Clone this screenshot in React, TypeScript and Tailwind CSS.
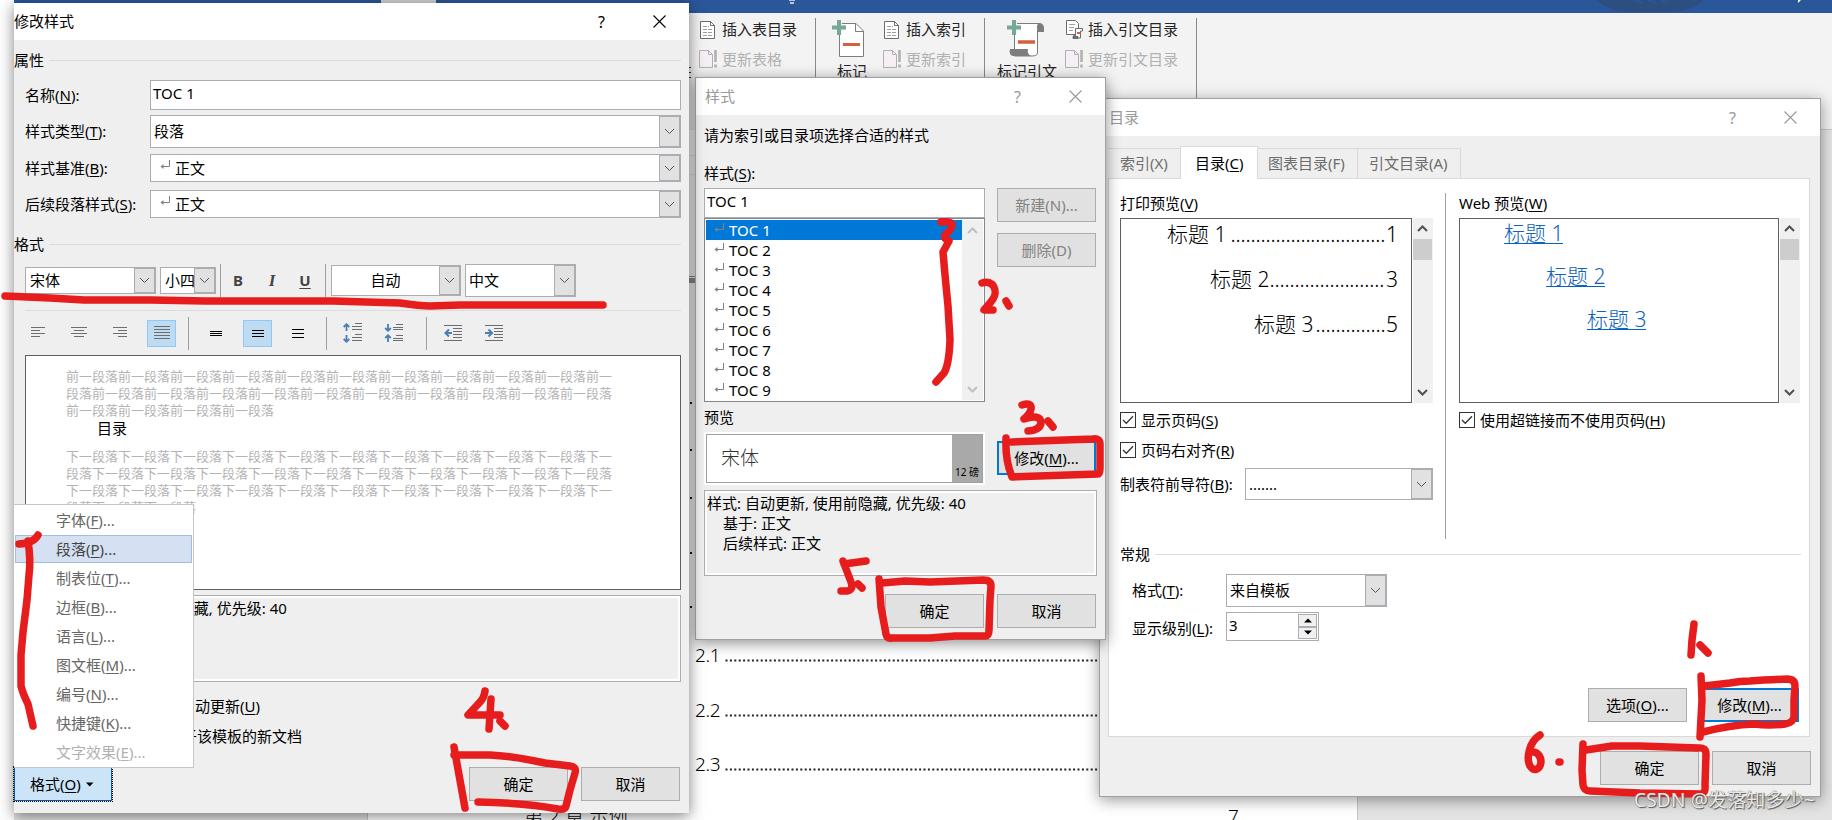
import type { ReactNode } from "react";
import clsx from "clsx";

const K = ({ children }: { children: ReactNode }) => (
  <span className="underline decoration-1 underline-offset-[2px]">{children}</span>
);

function Chevron({ up, bold, className }: { up?: boolean; bold?: boolean; className?: string }) {
  return (
    <svg width="11" height="7" viewBox="0 0 11 7" fill="none" className={className}>
      <path
        d={up ? "M1 6L5.5 1.5L10 6" : "M1 1L5.5 5.5L10 1"}
        stroke="currentColor"
        strokeWidth={bold ? 2 : 1}
      />
    </svg>
  );
}

function CloseIcon() {
  return (
    <svg width="13" height="13" viewBox="0 0 13 13" stroke="currentColor" strokeWidth="1.1">
      <path d="M.5 .5L12.5 12.5M12.5 .5L.5 12.5" />
    </svg>
  );
}

function ReturnIcon() {
  return (
    <svg width="10" height="10" viewBox="0 0 10 10" fill="none" stroke="#808080" className="shrink-0">
      <path d="M9.5 0V6.5H1" />
      <path d="M3.5 4V9L.5 6.5Z" fill="#808080" stroke="none" />
    </svg>
  );
}

function TitleBar({ title, active, className }: { title: string; active?: boolean; className?: string }) {
  return (
    <div
      className={clsx(
        "flex h-[37px] shrink-0 items-center bg-white",
        active ? "text-black" : "text-[#999]",
        className
      )}
    >
      <span className="flex-1">{title}</span>
      <span className="mr-[48px] text-base">?</span>
      <CloseIcon />
    </div>
  );
}

function Select({ children, className }: { children: ReactNode; className?: string }) {
  return (
    <div className={clsx("flex border border-[#abadb3] bg-white", className)}>
      <div className="flex min-w-0 flex-1 items-center overflow-hidden pl-[3px]">{children}</div>
      <div className="flex w-[21px] shrink-0 items-center justify-center border border-[#abadb3] bg-[#e1e1e1] text-[#555]">
        <Chevron />
      </div>
    </div>
  );
}

function Button({
  children,
  primary,
  disabled,
  className,
}: {
  children: ReactNode;
  primary?: boolean;
  disabled?: boolean;
  className?: string;
}) {
  return (
    <button
      className={clsx(
        "flex h-[34px] w-[99px] shrink-0 items-center justify-center bg-[#e1e1e1]",
        primary ? "border-2 border-[#0078d7]" : "border border-[#adadad]",
        disabled && "text-[#838383]",
        className
      )}
    >
      {children}
    </button>
  );
}

function Section({ title, className }: { title: string; className?: string }) {
  return (
    <div className={clsx("flex h-5 shrink-0 items-center pb-[2px]", className)}>
      <span>{title}</span>
      <div className="ml-[5px] h-px flex-1 bg-[#dcdcdc]" />
    </div>
  );
}

function Lines({ rows, color = "#6d6d6d" }: { rows: number[][]; color?: string }) {
  return (
    <svg width="20" height="20" viewBox="0 0 20 20" stroke={color} className="shrink-0">
      {rows.map(([x1, x2, y], i) => (
        <path key={i} d={`M${x1} ${y}H${x2}`} />
      ))}
    </svg>
  );
}

const Divider = ({ className }: { className?: string }) => (
  <div className={clsx("h-[33px] w-px shrink-0 bg-[#a0a0a0]", className)} />
);

const menuItems = [
  { label: "字体", k: "F" },
  { label: "段落", k: "P", selected: true },
  { label: "制表位", k: "T" },
  { label: "边框", k: "B" },
  { label: "语言", k: "L" },
  { label: "图文框", k: "M" },
  { label: "编号", k: "N" },
  { label: "快捷键", k: "K" },
  { label: "文字效果", k: "E", disabled: true },
];

function FormatMenu() {
  return (
    <div className="absolute top-[501px] left-0 flex h-[264px] w-[180px] flex-col border border-l-0 border-[#c6c6c6] bg-white pt-[1px]">
      {menuItems.map((item) => (
        <div
          key={item.label}
          className={clsx(
            "mr-[1px] ml-[1px] flex shrink-0 items-center",
            item.selected ? "mb-px h-[28px] border border-[#a3bde3] bg-[#d5e1f2] pl-[40px] text-[#444]" : "h-[29px] pl-[41px]",
            item.disabled ? "text-[#b1b1b1]" : !item.selected && "text-[#666]"
          )}
        >
          <span>
            {item.label}(<K>{item.k}</K>)...
          </span>
        </div>
      ))}
    </div>
  );
}

function ModifyStyleDialog() {
  return (
    <div className="absolute top-[3px] left-[14px] flex h-[810px] w-[675px] flex-col bg-[#efefef] shadow-[0_3px_14px_rgba(0,0,0,0.5)]">
      <TitleBar title="修改样式" active className="pr-[23px]" />
      <Section title="属性" className="mt-[11px] mr-[8px]" />

      <div className="mt-[9px] flex h-[30px] shrink-0 items-center pl-[11px]">
        <span className="w-[125px]">名称(<K>N</K>):</span>
        <div className="flex h-full w-[531px] items-center border border-[#abadb3] bg-white pb-[3px] pl-[2px]">TOC 1</div>
      </div>
      <div className="mt-[5px] flex h-[33px] shrink-0 items-center pl-[11px]">
        <span className="w-[125px]">样式类型(<K>T</K>):</span>
        <Select className="h-full w-[531px]">段落</Select>
      </div>
      <div className="mt-[6px] flex h-[28px] shrink-0 items-center pl-[11px]">
        <span className="w-[125px]">样式基准(<K>B</K>):</span>
        <Select className="h-full w-[531px]">
          <span className="mr-[5px] mb-[6px] ml-[6px]"><ReturnIcon /></span>正文
        </Select>
      </div>
      <div className="mt-[8px] flex h-[28px] shrink-0 items-center pl-[11px]">
        <span className="w-[125px]">后续段落样式(<K>S</K>):</span>
        <Select className="h-full w-[531px]">
          <span className="mr-[5px] mb-[6px] ml-[6px]"><ReturnIcon /></span>正文
        </Select>
      </div>

      <Section title="格式" className="mt-[17px] mr-[8px]" />
      <div className="mt-[9px] flex h-[33px] shrink-0 items-center pl-[11px]">
        <Select className="h-[27px] w-[131px]"><span className="pl-px">宋体</span></Select>
        <Select className="ml-[4px] h-[27px] w-[56px]"><span className="pl-px whitespace-nowrap">小四</span></Select>
        <Divider className="ml-[4px]" />
        <span className="ml-[7px] w-[20px] text-center font-bold text-[#444]">B</span>
        <span className="ml-[14px] w-[20px] text-center font-[Liberation_Serif] text-[17px] font-bold text-[#444] italic">I</span>
        <span className="ml-[13px] w-[20px] text-center font-bold text-[#444] underline underline-offset-[2px]">U</span>
        <Divider className="ml-[10px]" />
        <Select className="ml-[5px] h-[31px] w-[130px]"><span className="flex-1 pr-[3px] text-center">自动</span></Select>
        <Select className="ml-[4px] h-[33px] w-[111px]">中文</Select>
      </div>

      <div className="mt-[13px] mr-[8px] ml-[11px] h-px shrink-0 bg-[#dcdcdc]" />
      <div className="mt-[6px] flex h-[33px] shrink-0 items-center pb-px pl-[14px]">
        <Lines rows={[[3, 17, 4.5], [3, 12, 7.5], [3, 17, 10.5], [3, 12, 13.5]]} />
        <span className="w-[21px]" />
        <Lines rows={[[2, 18, 4.5], [5, 15, 7.5], [2, 18, 10.5], [5, 15, 13.5]]} />
        <span className="w-[21px]" />
        <Lines rows={[[3, 17, 4.5], [8, 17, 7.5], [3, 17, 10.5], [8, 17, 13.5]]} />
        <div className="ml-[17px] flex h-[27px] w-[29px] items-center justify-center border border-[#90c8f6] bg-[#bfdbf1]">
          <Lines rows={[[2, 18, 3.5], [2, 18, 6.5], [2, 18, 9.5], [2, 18, 12.5], [2, 18, 15.5]]} />
        </div>
        <Divider className="ml-[12px]" />
        <span className="w-[17px]" />
        <Lines color="#000" rows={[[4, 16, 8.5], [4, 16, 10.5], [4, 16, 12.5]]} />
        <div className="ml-[17px] flex h-[27px] w-[29px] items-center justify-center border border-[#90c8f6] bg-[#bfdbf1]">
          <Lines color="#000" rows={[[4, 16, 7.5], [4, 16, 10.5], [4, 16, 13.5]]} />
        </div>
        <span className="w-[16px]" />
        <Lines color="#000" rows={[[4, 16, 6.5], [4, 16, 10.5], [4, 16, 14.5]]} />
        <Divider className="ml-[18px]" />
        <svg width="20" height="20" viewBox="0 0 20 20" fill="none" className="ml-[16px] shrink-0">
          <path d="M12 .5H19M9 3.5H19M9 6.5H19M12 11.5H19M9 14.5H19M9 17.5H19" stroke="#6d6d6d" />
          <path d="M3.5 1V8M3.5 12V19M.7 4L3.5 1.2L6.3 4M.7 16L3.5 18.8L6.3 16" stroke="#4a7fb5" strokeWidth="1.8" />
        </svg>
        <svg width="20" height="20" viewBox="0 0 20 20" fill="none" className="ml-[21px] shrink-0">
          <path d="M12 1.5H19M9 4.5H19M12 12.5H19M9 15.5H19M9 6.5H19M9 17.5H19" stroke="#6d6d6d" />
          <path d="M4 1V8M4 12V19M1.2 5L4 7.8L6.8 5M1.2 15L4 12.2L6.8 15" stroke="#4a7fb5" strokeWidth="1.8" />
        </svg>
        <Divider className="ml-[22px]" />
        <svg width="20" height="20" viewBox="0 0 20 20" fill="none" className="ml-[17px] shrink-0">
          <path d="M0 2.5H18M9 5.5H18M9 8.5H18M9 11.5H18M9 14.5H18M0 17.5H18" stroke="#6d6d6d" />
          <path d="M1 10H8M5 6.5L1.5 10L5 13.5" stroke="#4a7fb5" strokeWidth="2" />
        </svg>
        <svg width="20" height="20" viewBox="0 0 20 20" fill="none" className="ml-[21px] shrink-0">
          <path d="M0 2.5H18M9 5.5H18M9 8.5H18M9 11.5H18M9 14.5H18M0 17.5H18" stroke="#6d6d6d" />
          <path d="M0 10H7M3.5 6.5L7 10L3.5 13.5" stroke="#4a7fb5" strokeWidth="2" />
        </svg>
      </div>

      <div className="mt-[5px] mr-[8px] ml-[11px] h-[235px] shrink-0 overflow-hidden border border-[#5f5f5f] bg-white pt-[12px] pl-[40px] text-[13px] leading-[17px] text-[#b4b4b4]">
        <p className="w-[547px] break-all">{"前一段落".repeat(25)}</p>
        <p className="mb-[10px] pl-[31px] text-[15px] leading-[19px] text-black">目录</p>
        <p className="w-[547px] break-all">{"下一段落".repeat(34)}</p>
      </div>

      <div className="mt-[5px] mr-[8px] ml-[11px] h-[87px] shrink-0 border border-[#abadb3] bg-[#efefef] pt-[3px] pl-[2px] leading-[18px] ring-2 ring-white ring-inset">
        样式: 自动更新, 使用前隐藏, 优先级: 40
      </div>
      <div className="mt-[14px] flex h-5 shrink-0 items-center pl-[166px]">自动更新(<K>U</K>)</div>
      <div className="mt-[10px] flex h-5 shrink-0 items-center pl-[153px]">基于该模板的新文档</div>
      <div className="mt-[21px] flex h-[34px] shrink-0">
        <button className="flex w-[98px] items-center border border-[#0c5ba5] bg-[#cce4f7] pl-[15px] outline-1 outline-black outline-dotted">
          格式(<K>O</K>)
          <svg width="8" height="5" viewBox="0 0 8 5" className="ml-[5px]">
            <path d="M0 .5H7.5L3.7 4.5Z" />
          </svg>
        </button>
        <Button className="ml-[357px]">确定</Button>
        <Button className="ml-[13px]">取消</Button>
      </div>
      <FormatMenu />
    </div>
  );
}

function StyleDialog() {
  return (
    <div className="absolute top-[77px] left-[695px] flex h-[563px] w-[411px] flex-col border border-[#a0a0a0] bg-[#efefef] shadow-[0_3px_14px_rgba(0,0,0,0.45)]">
      <TitleBar title="样式" className="pr-[23px] pl-[9px]" />
      <p className="mt-[10px] ml-[8px] h-5 shrink-0 leading-5">请为索引或目录项选择合适的样式</p>
      <p className="mt-[18px] ml-[8px] h-5 shrink-0 leading-5">样式(<K>S</K>):</p>
      <div className="mt-[5px] flex shrink-0 pl-[8px]">
        <div className="w-[281px]">
          <div className="flex h-[30px] items-center border border-[#abadb3] bg-white pb-[3px] pl-[2px]">TOC 1</div>
          <div className="flex h-[184px] border border-[#828790] bg-white">
            <ul className="flex-1 pt-px pl-px">
              {[1, 2, 3, 4, 5, 6, 7, 8, 9].map((n) => (
                <li key={n} className={clsx("flex h-5 items-center pl-[8px]", n === 1 && "bg-[#0078d7] text-white")}>
                  <span className="mr-[5px] mb-[5px]"><ReturnIcon /></span>
                  TOC {n}
                </li>
              ))}
            </ul>
            <div className="my-px mr-px flex w-[21px] flex-col items-center justify-between bg-[#f0f0f0] py-[7px] text-[#bfbfbf]">
              <Chevron up bold />
              <Chevron bold />
            </div>
          </div>
          <p className="mt-[5px] h-5 leading-5">预览</p>
          <div className="mt-[5px] h-[53px] bg-white p-[2px]">
            <div className="flex h-full border border-[#a0a0a0]">
              <div className="flex flex-1 items-center pl-[14px] text-[19px] font-light text-[#333]">宋体</div>
              <div className="flex w-[30px] items-end justify-center bg-[#a9a9a9] pb-[5px] text-[10px] whitespace-nowrap">12 磅</div>
            </div>
          </div>
        </div>
        <div className="ml-[12px]">
          <Button disabled>新建(N)...</Button>
          <Button disabled className="mt-[11px]">删除(D)</Button>
          <Button primary className="mt-[174px]">修改(<K>M</K>)...</Button>
        </div>
      </div>
      <div className="mt-[5px] ml-[8px] h-[86px] w-[393px] shrink-0 border border-[#abadb3] pt-[2px] pl-[2px] leading-5 ring-2 ring-white ring-inset">
        <p>样式: 自动更新, 使用前隐藏, 优先级: 40</p>
        <p className="pl-[16px]">基于: 正文</p>
        <p className="pl-[16px]">后续样式: 正文</p>
      </div>
      <div className="mt-[18px] flex gap-[13px] pl-[189px]">
        <Button>确定</Button>
        <Button>取消</Button>
      </div>
    </div>
  );
}

function ScrollBar() {
  return (
    <div className="ml-px flex w-[20px] shrink-0 flex-col items-center bg-[#f0f0f0] text-[#505050]">
      <div className="flex h-[21px] items-center"><Chevron up bold className="mr-px" /></div>
      <div className="mr-px h-[21px] w-[19px] bg-[#cdcdcd]" />
      <Chevron bold className="mt-auto mr-px mb-[7px]" />
    </div>
  );
}

function Checkbox({ children }: { children: ReactNode }) {
  return (
    <div className="flex h-5 items-center">
      <svg width="16" height="16" viewBox="0 0 16 16" fill="none" stroke="#333" className="mr-[5px]">
        <rect x=".5" y=".5" width="15" height="15" fill="#fff" />
        <path d="M3 8L6.3 11.3L13 4.3" strokeWidth="1.3" />
      </svg>
      <span>{children}</span>
    </div>
  );
}

const headings = [
  { level: 1, page: 1, dots: 31, indent: "pl-[46px]", gap: "ml-[4px]", web: "ml-[44px]" },
  { level: 2, page: 3, dots: 23, indent: "pl-[89px]", gap: "ml-0", web: "ml-[86px]" },
  { level: 3, page: 5, dots: 14, indent: "pl-[133px]", gap: "ml-[2px]", web: "ml-[127px]" },
];

function TocDialog() {
  return (
    <div className="absolute top-[98px] left-[1099px] flex h-[699px] w-[722px] flex-col border border-[#a0a0a0] bg-[#efefef] shadow-[0_3px_14px_rgba(0,0,0,0.4)]">
      <TitleBar title="目录" className="pr-[23px] pl-[9px]" />
      <div className="mt-[10px] flex h-[32px] shrink-0 items-end pl-[8px] text-[#6d6d6d]">
        <div className="flex h-[30px] w-[72px] items-center border-t border-[#d9d9d9] pl-[12px]">索引(X)</div>
        <div className="relative z-10 -mb-px flex h-[33px] w-[78px] items-center border border-b-0 border-[#d9d9d9] bg-white pl-[14px] text-black">
          <span>目录(<K>C</K>)</span>
        </div>
        <div className="flex h-[30px] w-[100px] items-center border-t border-r border-[#d9d9d9] pl-[10px]">图表目录(F)</div>
        <div className="flex h-[30px] w-[103px] items-center border-t border-r border-[#d9d9d9] pl-[11px]">引文目录(A)</div>
      </div>

      <div className="ml-[8px] flex h-[559px] w-[702px] shrink-0 flex-col border border-[#d9d9d9] bg-white pl-[11px]">
        <div className="flex h-[360px] shrink-0 pt-[14px]">
          <div className="w-[325px]">
            <p className="h-5 leading-5">打印预览(<K>V</K>)</p>
            <div className="mt-[5px] flex h-[185px]">
              <div className="w-[292px] border border-[#5f5f5f] pr-[13px] text-[21px] font-light">
                {headings.map((h) => (
                  <div key={h.level} className={clsx("flex h-[45px] leading-[30px]", h.indent)}>
                    <span className="whitespace-nowrap">标题 {h.level}</span>
                    <span className={clsx("w-0 flex-1 tracking-[-0.13px] whitespace-nowrap", h.gap)}>
                      {".".repeat(h.dots)}
                    </span>
                    <span>{h.page}</span>
                  </div>
                ))}
              </div>
              <ScrollBar />
            </div>
            <div className="mt-[7px]"><Checkbox>显示页码(<K>S</K>)</Checkbox></div>
            <div className="mt-[10px]"><Checkbox>页码右对齐(<K>R</K>)</Checkbox></div>
            <div className="mt-[8px] flex h-[32px] items-center">
              <span className="w-[125px]">制表符前导符(<K>B</K>):</span>
              <Select className="h-full w-[188px]">.......</Select>
            </div>
          </div>
          <div className="w-px bg-[#a0a0a0]" />
          <div className="ml-[13px]">
            <p className="h-5 leading-5">Web 预览(<K>W</K>)</p>
            <div className="mt-[5px] flex h-[185px]">
              <div className="w-[320px] border border-[#5f5f5f] text-[21px] font-light text-[#0f62c0]">
                {headings.map((h) => (
                  <div key={h.level} className="h-[43px]">
                    <a className={clsx("inline-block h-[25px] border-b border-[#0563c1] leading-[28px]", h.web)}>标题 {h.level}</a>
                  </div>
                ))}
              </div>
              <ScrollBar />
            </div>
            <div className="mt-[7px]"><Checkbox>使用超链接而不使用页码(<K>H</K>)</Checkbox></div>
          </div>
        </div>

        <Section title="常规" className="mt-[6px] mr-[8px]" />
        <div className="mt-[9px] flex h-[33px] shrink-0 items-center pl-[12px]">
          <span className="w-[94px]">格式(<K>T</K>):</span>
          <Select className="h-full w-[161px]">来自模板</Select>
        </div>
        <div className="mt-[5px] flex h-[29px] shrink-0 items-center pl-[12px]">
          <span className="w-[94px] pt-[4px]">显示级别(<K>L</K>):</span>
          <div className="flex h-full w-[93px] border border-[#abadb3] p-px">
            <span className="flex-1 pl-px leading-[23px]">3</span>
            <div className="flex w-[19px] flex-col">
              <div className="flex flex-1 items-center justify-center border border-[#abadb3] bg-[#f0f0f0]">
                <svg width="8" height="5" viewBox="0 0 8 5"><path d="M0 4.5H8L4 .5Z" /></svg>
              </div>
              <div className="flex flex-1 items-center justify-center border border-[#abadb3] bg-[#f0f0f0]">
                <svg width="8" height="5" viewBox="0 0 8 5"><path d="M0 .5H8L4 4.5Z" /></svg>
              </div>
            </div>
          </div>
        </div>
        <div className="mt-[47px] flex gap-[13px] pl-[468px]">
          <Button>选项(<K>O</K>)...</Button>
          <Button primary>修改(<K>M</K>)...</Button>
        </div>
      </div>
      <div className="mt-[14px] flex gap-[13px] pl-[500px]">
        <Button>确定</Button>
        <Button>取消</Button>
      </div>
    </div>
  );
}

function TableDocIcon() {
  return (
    <svg width="16" height="18" viewBox="0 0 16 18" fill="#fff" stroke="#6d6d6d">
      <path d="M.5 .5H10.5L14.5 4.5V17.5H.5Z" />
      <path d="M10.5 .5V4.5H14.5" fill="none" />
      <path d="M3 5.5H9M3 8.5H12M3 11.5H12M3 14.5H12" stroke="#a0a0a0" strokeDasharray="4 1" />
    </svg>
  );
}

function UpdateIcon() {
  return (
    <svg width="18" height="18" viewBox="0 0 18 18" fill="#f6f0f6" stroke="#b1b1b1">
      <path d="M.5 .5H9.5L13.5 4.5V17.5H.5Z" />
      <path d="M9.5 .5V4.5H13.5" fill="none" />
      <path d="M16.5 0V12M16.5 14.5V17.5" strokeWidth="2.6" />
    </svg>
  );
}

function CiteIcon() {
  return (
    <svg width="18" height="19" viewBox="0 0 18 19" fill="#fff" stroke="#6d6d6d">
      <path d="M.5 .5H9.5L12.5 3.5V14.5H.5Z" />
      <path d="M3 4.5H9M3 7.5H8M3 10.5H7" stroke="#a0a0a0" />
      <path d="M9.5 8.5H16.5V11H14.5V18H7.5V15.5H9.5Z" />
      <path d="M7 16.5H12V18.5H7Z" fill="#6d6d6d" />
      <path d="M11 13H14" stroke="#d35f3f" strokeWidth="2" />
    </svg>
  );
}

function MarkEntryIcon() {
  return (
    <svg width="34" height="38" viewBox="0 0 34 38" fill="none">
      <path d="M7.5 3.5H24L31.5 11V36.5H7.5Z" fill="#fff" stroke="#7d7d7d" />
      <path d="M23.5 3.5V11.5H31.5" stroke="#7d7d7d" />
      <path d="M4 0H10V5H14V11H10V15H4V11H0V5H4Z" fill="#f3f3f3" />
      <path d="M11 24.5H28" stroke="#d35f3f" strokeWidth="3" />
      <path d="M7 0V15M0 7.5H14" stroke="#76a797" strokeWidth="4" />
    </svg>
  );
}

function MarkCitationIcon() {
  return (
    <svg width="38" height="38" viewBox="0 0 38 38" fill="none">
      <path d="M7.5 3.5H33C30 4 30.5 7 30.5 11V33C30.5 35 28 36 25 36H7.5Z" fill="#fff" stroke="#7d7d7d" />
      <path d="M32 3C35 3 37 5 37 8V12H30.5V6C30.5 4 31 3 32 3Z" fill="#7d7d7d" />
      <path d="M3 29H21C20 33 22 36 25 36H6C3 36 2 32 3 29Z" fill="#7d7d7d" />
      <path d="M4 0H10V5H14V11H10V15H4V11H0V5H4Z" fill="#f3f3f3" />
      <path d="M11 22H28" stroke="#d35f3f" strokeWidth="3.5" />
      <path d="M7 0V15M0 7.5H14" stroke="#76a797" strokeWidth="4" />
    </svg>
  );
}

function RibbonPair({ icon, top, bottom }: { icon: ReactNode; top: string; bottom: string }) {
  return (
    <div className="flex flex-col text-[15px] whitespace-nowrap">
      <div className="flex h-[29px] items-center">
        <span className="w-[22px]">{icon}</span>
        <span className="text-[#262626]">{top}</span>
      </div>
      <div className="flex h-[29px] items-center pt-px">
        <span className="-ml-px w-[23px]"><UpdateIcon /></span>
        <span className="text-[#b1b1b1]">{bottom}</span>
      </div>
    </div>
  );
}

function WordWindow() {
  return (
    <div className="ml-[14px] flex h-[820px] flex-col bg-[#e3e3e3]">
      <div className="h-[13px] shrink-0 bg-[#2a579a]">
        <svg width="1818" height="13" viewBox="14 0 1818 13">
          <rect x="381" y="0" width="55" height="3" fill="#d4d4d4" />
          <path d="M1596 0H1704Q1690 12 1672 12H1628Q1610 12 1596 0Z" fill="#2d4e81" />
          <path d="M1635 0L1642 3M1648 0L1656 3M1662 0L1667 2" stroke="#2a579a" strokeWidth="2" />
          <path d="M789 0H795M790 3H794" stroke="#e6ecf5" strokeWidth="1.6" />
          <path d="M1798 0H1801L1798 3Z" fill="#fff" />
        </svg>
      </div>
      <div className="flex h-[117px] shrink-0 items-start border-b border-[#c8c8c8] bg-[#f3f3f3] pl-[685px]">
        <div className="mt-[2px] w-[116px] pl-px">
          <RibbonPair icon={<TableDocIcon />} top="插入表目录" bottom="更新表格" />
        </div>
        <div className="mt-[5px] h-[90px] w-px bg-[#8a8a8a]" />
        <div className="mt-[7px] ml-[16px] flex w-[52px] flex-col">
          <MarkEntryIcon />
          <span className="mt-[3px] ml-[5px] leading-5 text-[#262626]">标记</span>
        </div>
        <div className="mt-[2px] w-[100px]">
          <RibbonPair icon={<TableDocIcon />} top="插入索引" bottom="更新索引" />
        </div>
        <div className="mt-[5px] h-[90px] w-px bg-[#8a8a8a]" />
        <div className="mt-[7px] ml-[12px] flex w-[68px] flex-col whitespace-nowrap">
          <span className="ml-[10px] h-[38px]"><MarkCitationIcon /></span>
          <span className="mt-[3px] leading-5 text-[#262626]">标记引文</span>
        </div>
        <div className="mt-[2px] w-[131px] pl-px">
          <RibbonPair icon={<CiteIcon />} top="插入引文目录" bottom="更新引文目录" />
        </div>
        <div className="mt-[5px] h-[90px] w-px bg-[#8a8a8a]" />
      </div>
      <div className="ml-[353px] h-[690px] w-[991px] overflow-hidden border-x border-[#c6c6c6] bg-white pt-[499px] pl-[327px] text-[19px] font-light">
        {["2.1", "2.2", "2.3"].map((n) => (
          <div key={n} className="flex h-[54.6px] items-center pb-[1px] leading-none tracking-[-0.4px]">
            <span className="w-[30px] shrink-0">{n}</span>
            <svg width="380" height="3" className="mt-[10px]">
              <path d="M.5 1.5H380" stroke="#222" strokeWidth="1.8" strokeDasharray="2 2.4" />
            </svg>
          </div>
        ))}
        <div className="mt-[8px] -ml-[171px] flex leading-[30px]">
          <span className="w-[704px] tracking-[0.3px]">第 2 章 示例</span>
          <span>7</span>
        </div>
      </div>
    </div>
  );
}

// strip of the document that shows between the two left dialogs
function GapMarks() {
  return (
    <svg width="6" height="740" viewBox="689 0 6 740" className="absolute top-0 left-[689px]">
      <path d="M689 129.5H695M689 155.5H695M689 174.5H695" stroke="#a6a6a6" />
      <path d="M689 67.5H691M689 72.5H691M689 77.5H691" stroke="#222" />
      <path d="M689 276.5H695" stroke="#666" />
      <path d="M689 280.5H695" stroke="#666" strokeWidth="5" />
      <path d="M690 403H695M690 450H695M690 498H695M690 553H695M690 607H695" stroke="#111" strokeWidth="2" strokeDasharray="2 3" />
    </svg>
  );
}

const strokes = [
  "M5 296L50 298L84 300L150 300L206 301L333 301L400 303Q420 306 430 306L460 305H603",
  "M19 544Q34 543 38 535M28 541Q31 560 29 575L27 600L23 632L21 655V686Q23 694 28 704L33 726",
  "M485 691Q484 698 480 702L468 715H500M491 699L489 729M500 721L505 726",
  "M454 747L465 808M454 755H490Q512 756 545 763L570 766Q577 767 575 773L570 790L566 806Q565 810 558 809Q525 803 478 802",
  "M941 222Q950 221 952 224Q953 228 946 234Q942 238 949 241L943 252L945 275L948 306L950 340Q949 365 944 373L936 382",
  "M982 283C994 279 998 292 993 299C990 304 985 308 984 310H993M1006 301L1009 306",
  "M1022 405Q1032 402 1031 409Q1030 414 1024 419Q1040 414 1041 422Q1041 430 1028 431M1048 421L1053 427",
  "M1006 438Q1005 460 1012 477L1098 474Q1100 474 1100 468V444Q1100 438 1093 439L1012 442",
  "M866 561L844 564M843 561L851 582Q854 590 847 591H841M858 584L862 588",
  "M879 579L881 607L886 634Q887 639 892 638H930L955 636H985Q989 636 989 630L990 600L991 586Q991 580 983 580L930 582L905 581L882 583",
  "M1540 735C1529 742 1526 758 1530 766C1534 772 1540 770 1541 762C1541 756 1537 752 1533 752",
  "M1559 762H1560",
  "M1694 624L1692 640L1691 655M1700 645L1708 653",
  "M1701 676L1702 700L1700 737M1703 732Q1730 725 1754 724Q1770 726 1785 724Q1793 723 1794 717V700L1795 686Q1795 679 1787 679Q1765 680 1750 681Q1740 681 1730 683L1704 686",
  "M1583 744L1582 770L1583 785Q1584 791 1590 791L1640 793L1700 794Q1706 794 1705 785L1706 754Q1706 747 1698 748L1640 746H1612L1586 750",
];

function Annotations() {
  return (
    <svg
      width="1832"
      height="820"
      viewBox="0 0 1832 820"
      fill="none"
      stroke="#e71c1c"
      strokeWidth="7.5"
      strokeLinecap="round"
      strokeLinejoin="round"
      className="pointer-events-none absolute inset-0"
    >
      {strokes.map((d) => (
        <path key={d} d={d} />
      ))}
    </svg>
  );
}

export default function App() {
  return (
    <main className="relative h-[820px] w-[1832px] overflow-hidden bg-white font-['Noto_Sans','Noto_Sans_CJK_SC',sans-serif] text-[15px] leading-none text-black">
      <WordWindow />
      <TocDialog />
      <StyleDialog />
      <ModifyStyleDialog />
      <GapMarks />
      <Annotations />
      <span className="absolute top-[788px] left-[1634px] text-[19px] leading-6 tracking-[0.2px] whitespace-nowrap text-[#e8e8e8] [text-shadow:1px_1px_1px_#555,-0.5px_-0.5px_0_#888]">
        CSDN @发落知多少~
      </span>
    </main>
  );
}
